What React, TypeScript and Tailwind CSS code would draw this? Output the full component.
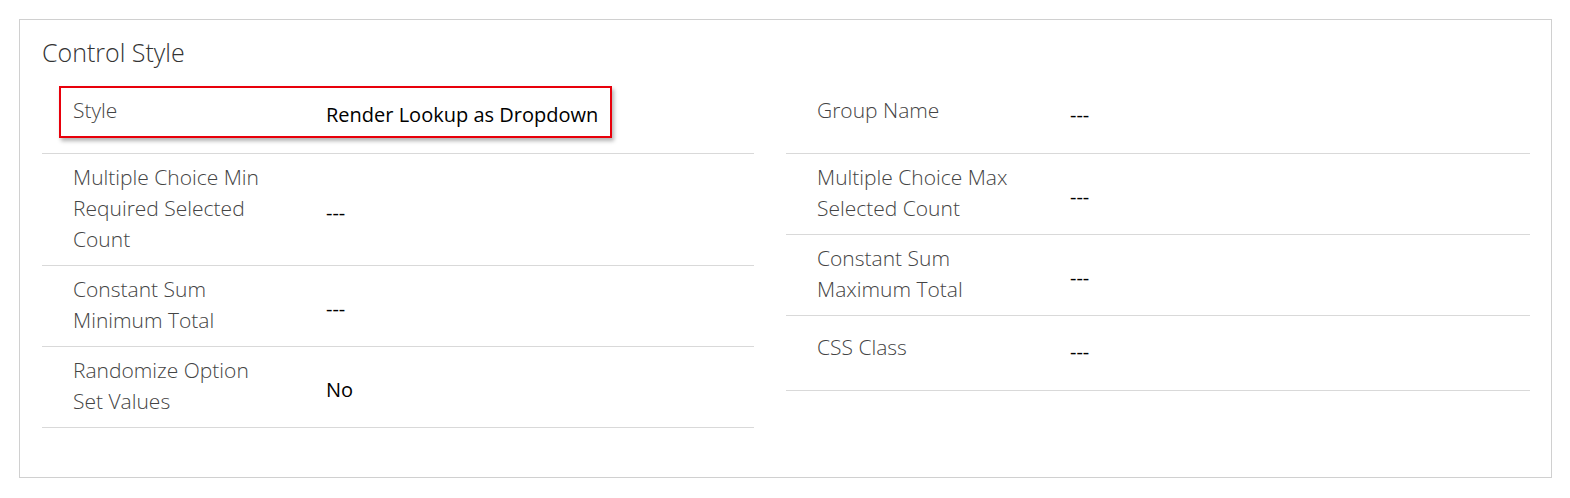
import React from "react";

type Field = {
    label: string[];
    value: string;
    highlight?: boolean;
};

const leftFields: Field[] = [
    { label: ["Style"], value: "Render Lookup as Dropdown", highlight: true },
    { label: ["Multiple Choice Min", "Required Selected", "Count"], value: "---" },
    { label: ["Constant Sum", "Minimum Total"], value: "---" },
    { label: ["Randomize Option", "Set Values"], value: "No" },
];

const rightFields: Field[] = [
    { label: ["Group Name"], value: "---" },
    { label: ["Multiple Choice Max", "Selected Count"], value: "---" },
    { label: ["Constant Sum", "Maximum Total"], value: "---" },
    { label: ["CSS Class"], value: "---" },
];

function FieldRow({ field }: { field: Field }) {
    const single = field.label.length === 1;

    return (
        <div
            className={`relative flex items-center border-b border-[#d9d9d9] py-2 pl-[31px] ${
                single ? "min-h-[75px]" : ""
            }`}
        >
            {/* annotation box */}
            {field.highlight && (
                <div className="pointer-events-none absolute left-[17px] top-[7px] h-[52px] w-[553px] border-2 border-[#e8000b] shadow-[2px_3px_4px_rgba(0,0,0,0.3)]" />
            )}
            <div
                className={`w-[253px] shrink-0 text-[21px] leading-[31px] font-[350] text-[#444] ${
                    single ? "pb-[12px]" : "pb-[2px]"
                }`}
            >
                {field.label.map((line) => (
                    <div key={line}>{line}</div>
                ))}
            </div>
            <div
                className={`text-[20px] leading-[31px] text-black ${
                    single ? "pb-[4px]" : "pt-[5px]"
                }`}
            >
                {field.value}
            </div>
        </div>
    );
}

export default function App() {
    return (
        <div
            className="bg-white p-[19px]"
            style={{ fontFamily: '"Open Sans", "Noto Sans", sans-serif' }}
        >
            <div className="h-[459px] w-[1533px] border border-[#d0d0d0] px-[22px] pt-[16px]">
                <h2 className="mb-[11px] text-[25px] leading-[32px] font-[350] text-[#333]">
                    Control Style
                </h2>
                <div className="grid grid-cols-[712px_744px] gap-x-[32px]">
                    <div className="flex flex-col">
                        {leftFields.map((f) => (
                            <FieldRow key={f.label.join(" ")} field={f} />
                        ))}
                    </div>
                    <div className="flex flex-col">
                        {rightFields.map((f) => (
                            <FieldRow key={f.label.join(" ")} field={f} />
                        ))}
                    </div>
                </div>
            </div>
        </div>
    );
}
